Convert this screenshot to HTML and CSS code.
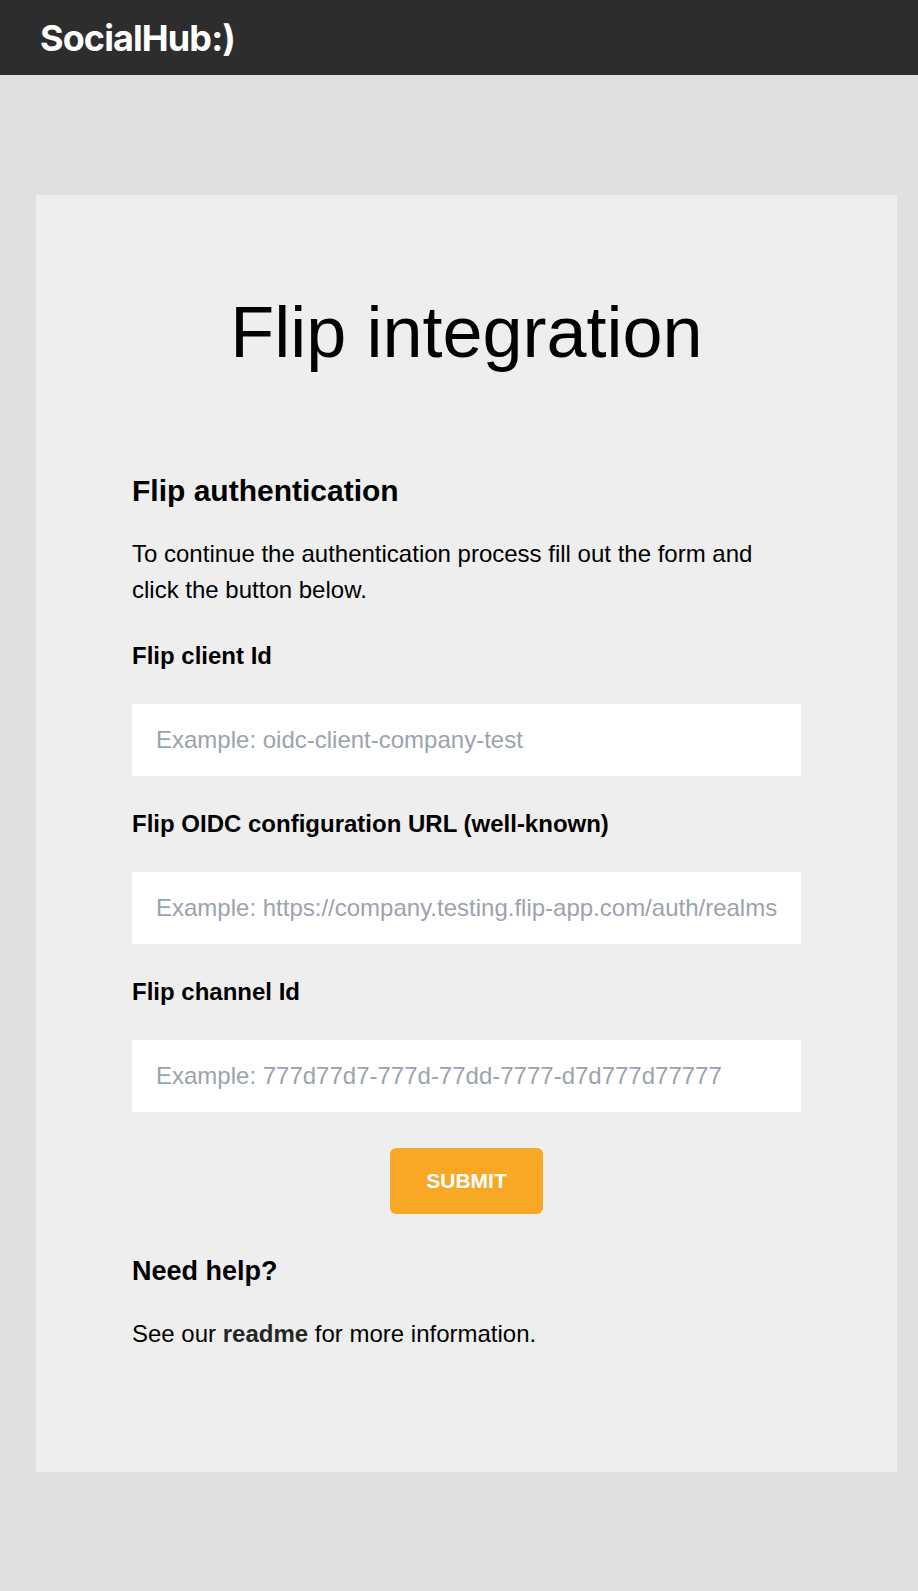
FILE: index.html
```html
<!DOCTYPE html>
<html lang="en">
<head>
<meta charset="utf-8">
<title>Flip integration</title>
<link rel="stylesheet" href="styles.css">
</head>
<body>
<header class="topbar"><span class="logo">SocialHub:)</span></header>
<main class="card">
  <h1 class="title">Flip integration</h1>
  <form class="form">
    <h2 class="heading">Flip authentication</h2>
    <p class="text">To continue the authentication process fill out the form and click the button below.</p>
    <label class="label" for="client">Flip client Id</label>
    <input class="input" id="client" type="text" placeholder="Example: oidc-client-company-test">
    <label class="label" for="oidc">Flip OIDC configuration URL (well-known)</label>
    <input class="input" id="oidc" type="text" placeholder="Example: https://company.testing.flip-app.com/auth/realms/company/.well-known/openid-configuration">
    <label class="label" for="channel">Flip channel Id</label>
    <input class="input" id="channel" type="text" placeholder="Example: 777d77d7-777d-77dd-7777-d7d777d77777">
    <div class="actions"><button class="submit" type="button">SUBMIT</button></div>
    <h2 class="heading help">Need help?</h2>
    <p class="text">See our <a class="link" href="#">readme</a> for more information.</p>
  </form>
</main>
</body>
</html>
```
FILE: styles.css
```css
* { box-sizing: border-box; }
html, body { margin: 0; padding: 0; }
body {
  background: #e0e0e0;
  color: #000;
  font-family: "Liberation Sans", Arial, sans-serif;
  min-height: 1591px;
}
.topbar {
  height: 75px;
  background: #2d2d2d;
  padding-left: 40px;
  display: flex;
  align-items: center;
}
.logo {
  color: #fff;
  font-family: "Inter", sans-serif;
  font-weight: 700;
  font-size: 36px;
  letter-spacing: -0.9px;
  line-height: 1;
}
.card {
  margin: 120px 21px 0 36px;
  height: 1277px;
  background: #eee;
  padding: 95px 96px 0;
}
.title {
  margin: 0;
  text-align: center;
  font-size: 72px;
  font-weight: 400;
  line-height: 84px;
}
.form { margin-top: 99px; display: flex; flex-direction: column; }
.heading {
  margin: 0;
  font-size: 30px;
  font-weight: 700;
  line-height: 36px;
}
.text {
  margin: 27px 0 0;
  font-size: 24px;
  line-height: 36px;
}
.label {
  margin-top: 30px;
  margin-bottom: 30px;
  font-size: 24px;
  font-weight: 700;
  line-height: 36px;
}
.input {
  display: block;
  width: 100%;
  height: 72px;
  border: 0;
  background: #fff;
  padding: 0 24px;
  font-family: inherit;
  font-size: 24px;
  color: #000;
  outline: none;
}
.input::placeholder { color: #9ca3af; opacity: 1; }
.actions { display: flex; justify-content: center; margin-top: 36px; }
.submit {
  width: 153px;
  height: 66px;
  border: 0;
  border-radius: 6px;
  background: #f9a825;
  color: #fff;
  font-family: inherit;
  font-size: 21px;
  font-weight: 700;
}
.help { margin-top: 39px; font-size: 27px; }
.link { color: #262626; font-weight: 700; text-decoration: none; }
```
